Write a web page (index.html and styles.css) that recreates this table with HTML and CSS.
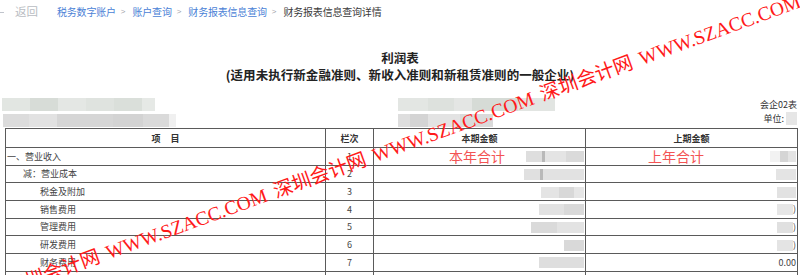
FILE: index.html
```html
<!DOCTYPE html>
<html lang="zh-CN">
<head>
<meta charset="utf-8">
<title>财务报表信息查询详情</title>
<link rel="stylesheet" href="styles.css">
</head>
<body>
<div class="page">
  <nav class="crumbs">
    <span class="back-mark"></span>
    <span class="back">返回</span>
    <a class="crumb">税务数字账户</a><span class="sep">&gt;</span>
    <a class="crumb">账户查询</a><span class="sep">&gt;</span>
    <a class="crumb">财务报表信息查询</a><span class="sep">&gt;</span>
    <span class="crumb current">财务报表信息查询详情</span>
  </nav>

  <div class="title">利润表</div>
  <div class="subtitle">(适用未执行新金融准则、新收入准则和新租赁准则的一般企业)</div>

  <div class="meta">
    <div class="meta-col">
      <span class="blur b-l1"></span>
      <span class="blur b-l2"></span>
    </div>
    <div class="meta-col">
      <span class="blur b-c1"></span>
      <span class="blur b-c2"></span>
    </div>
    <div class="meta-col meta-right">
      <span class="meta-text">会企02表</span>
      <span class="meta-text">单位: <span class="blur b-unit"></span></span>
    </div>
  </div>

  <table class="report">
    <colgroup>
      <col class="c-item"><col class="c-no"><col class="c-amt"><col class="c-amt">
    </colgroup>
    <thead>
      <tr class="head-row"><th>项&nbsp;&nbsp;&nbsp;&nbsp;&nbsp;目</th><th>栏次</th><th>本期金额</th><th>上期金额</th></tr>
    </thead>
    <tbody>
      <tr>
        <td class="lvl0">一、营业收入</td><td class="no">1</td>
        <td class="amt"><span class="note note-cur">本年合计</span><span class="blur a1"></span></td>
        <td class="amt"><span class="note note-prev">上年合计</span><span class="blur p1"></span></td>
      </tr>
      <tr>
        <td class="lvl1">减：营业成本</td><td class="no">2</td>
        <td class="amt"><span class="blur a2"></span></td>
        <td class="amt"><span class="blur p2"></span></td>
      </tr>
      <tr>
        <td class="lvl2">税金及附加</td><td class="no">3</td>
        <td class="amt"><span class="blur a3"></span></td>
        <td class="amt"><span class="blur p3"></span></td>
      </tr>
      <tr>
        <td class="lvl2">销售费用</td><td class="no">4</td>
        <td class="amt"><span class="blur a4"></span></td>
        <td class="amt"><span class="blur p4"></span>)</td>
      </tr>
      <tr>
        <td class="lvl2">管理费用</td><td class="no">5</td>
        <td class="amt"><span class="blur a5"></span></td>
        <td class="amt"><span class="blur p5"></span>)</td>
      </tr>
      <tr>
        <td class="lvl2">研发费用</td><td class="no">6</td>
        <td class="amt"><span class="blur a6"></span></td>
        <td class="amt"><span class="blur p6"></span>)</td>
      </tr>
      <tr>
        <td class="lvl2">财务费用</td><td class="no">7</td>
        <td class="amt"><span class="blur a7"></span></td>
        <td class="amt">0.00</td>
      </tr>
      <tr>
        <td class="lvl2"></td><td class="no"></td>
        <td class="amt"></td>
        <td class="amt"></td>
      </tr>
    </tbody>
  </table>

  <div class="watermark">深圳会计网 WWW.SZACC.COM 深圳会计网 WWW.SZACC.COM 深圳会计网 WWW.SZACC.COM 深圳会计网</div>
</div>
</body>
</html>
```

FILE: styles.css
```css
html, body {
  margin: 0;
  padding: 0;
  background: #fff;
  overflow: hidden;
}

.page {
  position: relative;
  width: 800px;
  height: 275px;
  overflow: hidden;
  font-family: "Noto Sans CJK SC", "Liberation Sans", sans-serif;
  color: #333;
}

/* breadcrumb */
.crumbs {
  display: flex;
  align-items: center;
  height: 24px;
  font-size: 10px;
  line-height: 1;
}
.back-mark {
  width: 4px;
  height: 1px;
  background: #c0c4cc;
}
.back {
  margin-left: 11px;
  margin-right: 19px;
  font-size: 11.5px;
  color: #b9bcc2;
}
.crumb {
  color: #4a7fd6;
  letter-spacing: -0.2px;
}
.crumb.current {
  color: #3a3a3a;
}
.sep {
  color: #a0a4ab;
  font-family: "Liberation Sans", sans-serif;
  font-size: 8px;
  margin: 0 7px 0 5px;
}

/* title */
.title {
  margin-top: 25px;
  height: 17px;
  font-size: 12.5px;
  line-height: 17px;
  font-weight: bold;
  text-align: center;
  color: #222;
}
.subtitle {
  height: 17px;
  font-size: 12.5px;
  line-height: 17px;
  font-weight: bold;
  text-align: center;
  color: #222;
  letter-spacing: 0.05px;
}

/* meta area */
.meta {
  display: grid;
  grid-template-columns: 396px 1fr auto;
  padding: 15px 3px 0 2px;
  height: 30px;
}
.meta-col {
  display: flex;
  flex-direction: column;
  gap: 3px;
}
.meta-right {
  align-items: flex-end;
  gap: 1px;
}
.meta-text {
  font-size: 9px;
  line-height: 13px;
  display: flex;
  align-items: center;
  gap: 2px;
}

.blur {
  display: inline-block;
  height: 13px;
}
.b-l1 {
  width: 153px;
  background: linear-gradient(90deg, #e2e6e2 0 28px, #d7dcd7 28px 56px, #e4e7e4 56px 84px, #dfe3df 84px 112px, #dadfda 112px 140px, #e6e9e6 140px);
}
.b-l2 {
  width: 173px;
  margin-left: 1px;
  background: linear-gradient(90deg, #dcdcdc 0 26px, #e2e2e2 26px 54px, #d6d6d6 54px 110px, #d3d3d3 110px 140px, #dadada 140px 166px, #f0f0f0 166px);
}
.b-c1 {
  width: 157px;
  background: linear-gradient(90deg, #e3e6e3 0 30px, #dde1dd 30px 56px, #e4e6e4 56px 74px, #d6dbd6 74px 120px, #e2e5e2 120px);
}
.b-c2 {
  width: 95px;
  background: linear-gradient(90deg, #dedede 0 12px, #d4d4d4 12px 30px, #e3e3e3 30px 62px, #dadada 62px);
}
.b-unit {
  width: 11px;
  height: 13px;
  background: #e6e6e6;
}

/* table */
.report {
  margin-left: 5px;
  width: 792px;
  border-collapse: collapse;
  table-layout: fixed;
  font-size: 9px;
  line-height: 11px;
}
.c-item { width: 320px; }
.c-no { width: 48px; }
.c-amt { width: 212px; }

.report tr { height: 17.67px; }
.report tr.head-row { height: 19px; }

.report th,
.report td {
  border: 1px solid #5a5a5a;
  padding: 0 1px;
  white-space: nowrap;
  overflow: hidden;
}
.report th {
  font-weight: bold;
  color: #333;
  text-align: center;
}
.report td {
  color: #444;
}
.lvl0 { padding-left: 1px; }
.report td.lvl1 { padding-left: 17px; }
.report td.lvl2 { padding-left: 34px; }
.no { text-align: center; }
.amt {
  text-align: right;
  position: relative;
}
.report td.amt { padding-right: 1px; }

.amt .blur {
  height: 11px;
  vertical-align: middle;
}
.a1 { width: 58px; background: linear-gradient(90deg, #dedede 0 16px, #b9b9b9 16px 19px, #e4e4e4 19px 40px, #dadada 40px); }
.a2 { width: 60px; background: linear-gradient(90deg, #e0e0e0 0 16px, #b9b9b9 16px 19px, #e2e2e2 19px); }
.a3 { width: 43px; background: linear-gradient(90deg, #e4e4e4 0 18px, #d8d8d8 18px 33px, #e6e6e6 33px); }
.a4 { width: 45px; background: linear-gradient(90deg, #e2e2e2 0 25px, #d9d9d9 25px); }
.a5 { width: 53px; background: linear-gradient(90deg, #dadada 0 26px, #e3e3e3 26px); }
.a6 { width: 20px; background: #d9d9d9; }
.a7 { width: 45px; background: #dedede; }
.p1 { width: 26px; background: linear-gradient(90deg, #f2f2f2 0 10px, #d5d5d5 10px 18px, #e4e4e4 18px); }
.p2 { width: 20px; background: #e4e4e4; }
.p3 { width: 19px; background: #e2e2e2; }
.p4 { width: 16px; background: #e6e6e6; }
.p5 { width: 16px; background: #e0e0e0; }
.p6 { width: 16px; background: #e4e4e4; }

.note {
  position: absolute;
  top: 50%;
  transform: translateY(-50%);
  font-size: 14px;
  line-height: 16px;
  color: #f35454;
}
.note-cur { left: 75px; }
.note-prev { left: 62px; }

/* watermark overlay */
.watermark {
  position: absolute;
  left: 11px;
  top: 279px;
  white-space: nowrap;
  font-family: "Liberation Serif", "Noto Sans CJK SC", serif;
  font-size: 19.5px;
  line-height: 20px;
  word-spacing: 3px;
  color: #ff1a1a;
  transform-origin: 0 100%;
  transform: rotate(-20deg);
  pointer-events: none;
}
```
